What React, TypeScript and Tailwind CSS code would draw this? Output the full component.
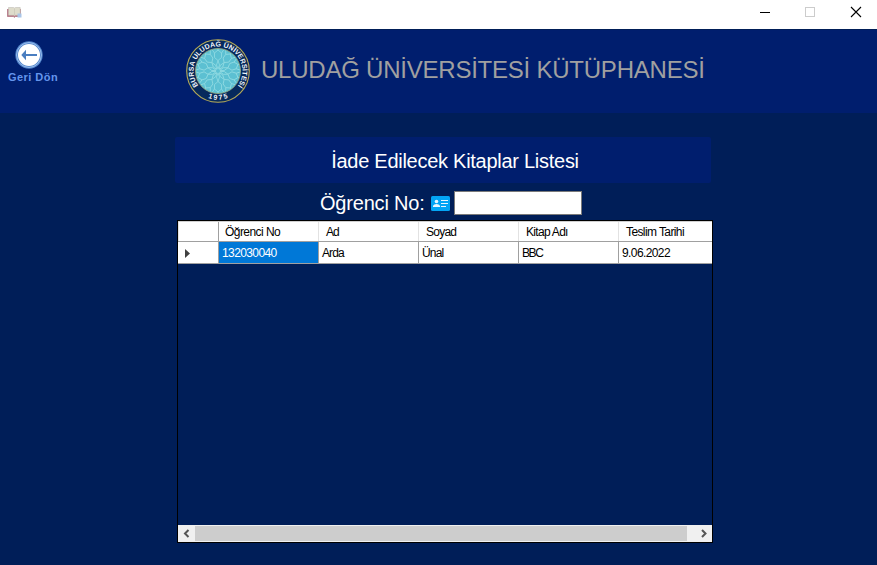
import React from "react";

const columns = [
  { title: "Öğrenci No", value: "132030040", head: "pl-[6px] tracking-[-0.55px]", cell: "bg-[#0078d7] text-white tracking-[-0.6px]" },
  { title: "Ad", value: "Arda", head: "pl-[7px] tracking-[-0.9px]", cell: "tracking-[-0.9px]" },
  { title: "Soyad", value: "Ünal", head: "pl-[7px] tracking-[-0.75px]", cell: "tracking-[-0.85px]" },
  { title: "Kitap Adı", value: "BBC", head: "pl-[7px] tracking-[-0.7px]", cell: "tracking-[-1.4px]" },
  { title: "Teslim Tarihi", value: "9.06.2022", head: "pl-[7px] tracking-[-0.6px]", cell: "tracking-[-0.6px]" },
];

function BookIcon() {
  return (
    <svg className="h-3 w-[15px]" viewBox="0 0 15 12" fill="none">
      <path d="M.5 2v7.5h5.8l1.2.8 1-.8H13.5V2" fill="#b45f70" stroke="#b98290" />
      <path d="M1.5.5h5l1 .6 1-.6h4.700v7.800H8.500l-1 .7-1-.7h-5z" fill="#dedccb" stroke="#c1bdb5" strokeWidth=".6" />
      <path d="M7.500 2v6" stroke="#cbc8b8" strokeWidth=".8" />
      <rect x="10.500" y="6.500" width="4" height="4" fill="#a9c5e8" />
    </svg>
  );
}

function BackIcon() {
  return (
    <svg className="h-7 w-7" viewBox="0 0 28 28">
      <circle cx="14" cy="14" r="13.700" fill="#4f83ca" />
      <circle cx="14" cy="14" r="12.400" fill="none" stroke="#9fc0ee" strokeWidth="1" />
      <circle cx="14" cy="14" r="11" fill="#fff" />
      <path d="M8 14h14" stroke="#4a7ec0" strokeWidth="2" />
      <path d="M6.300 14 11 8.800v10.400z" fill="#4a7ec0" />
    </svg>
  );
}

function Seal() {
  const spokes = Array.from({ length: 10 }, (_, i) => i * 36);
  return (
    <svg className="h-16 w-16" viewBox="0 0 64 64">
      <defs>
        <path id="sealTop" d="M16.2 50.8A24.500 24.500 0 1 1 47.800 50.800" />
        <path id="sealBottom" d="M13.500 54A28.800 28.800 0 0 0 50.500 54" />
        <clipPath id="sealClip"><circle cx="32" cy="32" r="22" /></clipPath>
      </defs>
      <circle cx="32" cy="32" r="31.300" fill="#06295c" stroke="#b6ab58" strokeWidth="1.100" />
      <circle cx="32" cy="32" r="22.500" fill="#5cc0d2" stroke="#9fae80" strokeWidth=".8" />
      <g clipPath="url(#sealClip)" fill="none" stroke="#93dce3" strokeWidth=".8">
        {spokes.map((a) => (
          <g key={a} transform={`rotate(${a} 32 32)`}>
            <path d="M32 30 30.500 26 32 21.500 33.500 26z" />
            <path d="M32 21.500 28.500 18.500V14L32 11l3.500 3v4.500z" />
            <path d="M32 11V8M28.500 14l-2.500-3.500M35.500 14l2.500-3.500" />
          </g>
        ))}
      </g>
      <g fill="#f3f6fa" fontFamily="'Liberation Sans', Arial, sans-serif" fontWeight="700">
        <text fontSize="7">
          <textPath href="#sealTop" startOffset="50%" textAnchor="middle" textLength="108">BURSA ULUDAĞ ÜNİVERSİTESİ</textPath>
        </text>
        <text fontSize="7">
          <textPath href="#sealBottom" startOffset="50%" textAnchor="middle" textLength="20">1975</textPath>
        </text>
      </g>
    </svg>
  );
}

function IdIcon() {
  return (
    <svg className="h-[15px] w-[19px]" viewBox="0 0 19 15">
      <rect width="19" height="15" rx="1.500" fill="#03a5f5" />
      <circle cx="5.500" cy="5.500" r="1.800" fill="#e8f6ff" />
      <path d="M2 11V9.800Q3 8 5.500 8T9 9.800V11z" fill="#e8f6ff" />
      <path d="M10 4.500h7M10 7.500h7M10 10.500h5" stroke="#e8f6ff" />
    </svg>
  );
}

export default function App() {
  return (
    <div className="flex h-[565px] w-[877px] flex-col overflow-hidden bg-[#001e58] font-['Liberation_Sans',Arial,sans-serif]">
      <div className="flex h-[29px] shrink-0 justify-between bg-white">
        <div className="pt-[7px] pl-[7px]"><BookIcon /></div>
        <svg className="h-7 w-[137px]" viewBox="0 0 137 28" fill="none" shapeRendering="crispEdges">
          <path d="M20 12.500h10" stroke="#000" />
          <path d="M65.500 7.500h9v9h-9z" stroke="#ccc" />
          <path d="m111 7 10 10m0-10-10 10" stroke="#000" strokeWidth="1.100" shapeRendering="auto" />
        </svg>
      </div>
      <header className="flex h-[84px] shrink-0 border-t border-[#001e58] bg-[#001e6e]">
        <div className="w-[186px] pt-[11px] pl-2">
          <div className="pl-[7px]"><BackIcon /></div>
          <div className="mt-[2px] text-[11px] leading-[13px] font-bold whitespace-nowrap text-[#6495ed]"><span className="tracking-[0.45px]">Geri Dön</span></div>
        </div>
        <div className="pt-[9px]"><Seal /></div>
        <h1 className="pt-[25px] pl-[11px] text-[24px] leading-[30px] whitespace-nowrap text-[#a0a0a0]"><span className="tracking-[-0.23px]">ULUDAĞ ÜNİVERSİTESİ KÜTÜPHANESİ</span></h1>
      </header>
      <main className="flex flex-col pt-[24px] pl-[175px]">
        <div className="flex h-[46px] w-[536px] items-center justify-center rounded-[2px] bg-[#001e6e] pt-[2px] pl-6 text-[20px] leading-6 text-white">
          <span className="tracking-[-0.27px] whitespace-nowrap">İade Edilecek Kitaplar Listesi</span>
        </div>
        <div className="mt-2 flex h-6 items-center pl-[145px]">
          <label className="w-[111px] text-[20px] leading-6 whitespace-nowrap text-white"><span className="tracking-[-0.2px]">Öğrenci No:</span></label>
          <IdIcon />
          <input className="ml-1 h-6 w-32 border border-[#7a7a7a] bg-white outline-none" />
        </div>
        <div className="mt-[5px] ml-[2px] flex h-[323px] w-[536px] flex-col overflow-hidden border border-black text-[12px] text-black">
          <div className="flex h-[21px] shrink-0 border-t border-b border-[#a0a0a0] border-t-[#d0d0d0] bg-white">
            <div className="w-[41px] shrink-0 border-r border-l border-[#a0a0a0] border-l-[#e2e2e2]" />
            {columns.map((c) => (
              <div key={c.title} className={`w-[100px] shrink-0 border-r border-[#e2e2e2] leading-[21px] whitespace-nowrap ${c.head}`}>{c.title}</div>
            ))}
          </div>
          <div className="flex h-[22px] shrink-0 border-b border-[#a0a0a0] bg-white">
            <div className="flex w-[41px] shrink-0 items-center border-r border-[#a0a0a0] pt-[2px] pl-[7px]">
              <svg className="h-[9px] w-[5px]" viewBox="0 0 5 9"><path d="M0 0 5 4.500 0 9z" fill="#404040" /></svg>
            </div>
            {columns.map((c) => (
              <div key={c.title} className={`w-[100px] shrink-0 border-r border-[#a0a0a0] pl-[3px] leading-[23px] whitespace-nowrap ${c.cell}`}>{c.value}</div>
            ))}
          </div>
          <div className="flex-1" />
          <div className="flex h-[17px] shrink-0 items-center bg-[#f0f0f0]">
            <svg className="h-[17px] w-[17px]" viewBox="0 0 17 17" fill="none"><path d="m10.500 5-3.500 3.500 3.500 3.500" stroke="#555" strokeWidth="2" /></svg>
            <div className="h-[15px] w-[492px] bg-[#cdcdcd]" />
            <svg className="ml-2 h-[17px] w-[17px]" viewBox="0 0 17 17" fill="none"><path d="m7 5 3.500 3.500-3.500 3.500" stroke="#555" strokeWidth="2" /></svg>
          </div>
        </div>
      </main>
    </div>
  );
}
